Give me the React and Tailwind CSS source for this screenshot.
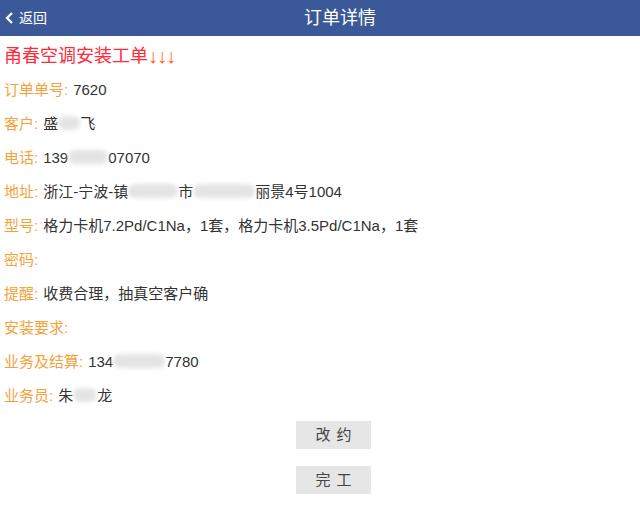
import React from 'react';

const Blur = ({ w }) => (
  <span className={`inline-block h-[14px] align-middle rounded-full bg-[#e4e4e4] blur-[2px] ${w}`} />
);

const rows = [
  { label: '订单单号', value: '7620' },
  { label: '客户', value: <>盛<Blur w="w-[22px]" />飞</> },
  { label: '电话', value: <>139<Blur w="w-[40px]" />07070</> },
  { label: '地址', value: <>浙江-宁波-镇<Blur w="w-[50px]" />市<Blur w="w-[62px]" />丽景4号1004</> },
  { label: '型号', value: '格力卡机7.2Pd/C1Na，1套，格力卡机3.5Pd/C1Na，1套' },
  { label: '密码', value: '' },
  { label: '提醒', value: '收费合理，抽真空客户确' },
  { label: '安装要求', value: '' },
  { label: '业务及结算', value: <>134<Blur w="w-[52px]" />7780</> },
  { label: '业务员', value: <>朱<Blur w="w-[24px]" />龙</> },
];

export default function App() {
  return (
    <div className="w-[640px] h-[505px] bg-white font-['Liberation_Sans','Noto_Sans_CJK_SC',sans-serif] overflow-hidden">
      <div className="relative h-[36px] bg-[#3b5998] flex items-center justify-center pl-[40px]">
        <div className="absolute left-[5px] top-0 h-full flex items-center text-white text-[14px]">
          <svg width="9" height="12" viewBox="0 0 9 12" className="mr-[5px]">
            <path d="M7 1 L2 6 L7 11" fill="none" stroke="white" strokeWidth="2.2" />
          </svg>
          返回
        </div>
        <span className="text-white text-[18px]">订单详情</span>
      </div>
      <div className="px-[4px]">
        <div className="h-[36px] pt-[4px] flex items-center text-[18px] text-[#ff2a3a]">
          甬春空调安装工单<span className="text-[#ff6a1a] text-[20px] font-bold tracking-[-1px]">↓↓↓</span>
        </div>
        {rows.map((r) => (
          <div key={r.label} className="h-[34px] flex items-center text-[15px] leading-none">
            <span className="text-[#f5a23c]">{r.label}:</span>
            <span className="ml-[5px] text-[#333] flex items-center">{r.value}</span>
          </div>
        ))}
      </div>
      <div className="flex flex-col items-center gap-[17px] mt-[9px] ml-[27px]">
        <button className="w-[75px] h-[28px] bg-[#e6e6e6] text-[#444] text-[15px] tracking-[6px] pl-[6px]">改约</button>
        <button className="w-[75px] h-[28px] bg-[#e6e6e6] text-[#444] text-[15px] tracking-[6px] pl-[6px]">完工</button>
      </div>
    </div>
  );
}
